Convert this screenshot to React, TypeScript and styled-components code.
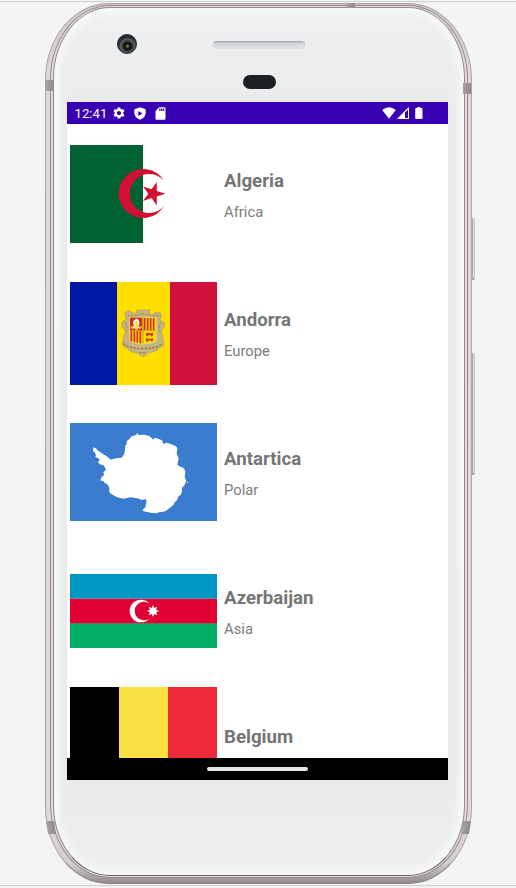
import React from "react";
import styled, { createGlobalStyle } from "styled-components";
import { MdSettings, MdSdCard } from "react-icons/md";

const GlobalStyle = createGlobalStyle`
  * { box-sizing: border-box; }
  body { margin: 0; background: #f4f4f4; font-family: Roboto, sans-serif; }
  svg { display: block; flex: none; }
`;

const Stage = styled.main`
  width: 516px;
  height: 888px;
  padding: 3px 0 0 45px;
  overflow: hidden;
  background:
    linear-gradient(#cdcdcd, #cdcdcd) 0 1px / 100% 1px no-repeat,
    linear-gradient(#cdcdcd, #cdcdcd) 0 885px / 100% 1px no-repeat,
    #f4f4f4;
`;

const Chassis = styled.div`
  position: relative;
  width: 427px;
  height: 881px;
  padding: 1px 3px 5px 4px;
  border: 1px solid #aaa4a6;
  border-bottom-color: #8a8285;
  border-radius: 64px / 77px;
  background: linear-gradient(#cfc8ca 0, #dfd8da 70px, #dfd9db 820px, #d2cccd 860px, #8f878a 880px);
`;

const Rim = styled.div`
  height: 100%;
  padding: 1px 2px;
  border: 1px solid #93888c;
  border-radius: 60px / 74px;
  background: #e2dcde;
`;

const Glass = styled.div`
  display: flex;
  flex-direction: column;
  height: 100%;
  border: 1px solid #958b8f;
  border-bottom-color: #65605f;
  border-radius: 57px / 71px;
  background: linear-gradient(#edeff0, #eaebed 12%, #e9eaec 88%, #eceef0);
  box-shadow: inset 0 0 7px 5px #f8f9fa;
`;

const AntennaBand = styled.i<{ $x: number; $y: number; $w: number; $h: number; $tilt?: number }>`
  position: absolute;
  left: ${(p) => p.$x}px;
  top: ${(p) => p.$y}px;
  width: ${(p) => p.$w}px;
  height: ${(p) => p.$h}px;
  background: linear-gradient(90deg, #a8a1a3, #918a8c);
  transform: skewX(${(p) => p.$tilt ?? 0}deg);
`;

const SideButton = styled.i<{ $y: number; $h: number }>`
  position: absolute;
  left: 426px;
  top: ${(p) => p.$y}px;
  width: 3px;
  height: ${(p) => p.$h}px;
  border: 1px solid #c5c6c4;
  border-left-color: #aaa6a7;
  border-bottom: 2px solid #8d8a88;
  border-radius: 0 2px 2px 0;
  background: #dfdfdd;
`;

const TopBezel = styled.div`
  display: grid;
  flex: none;
  height: 94px;
  padding-top: 26px;
  grid-template-columns: 63px 20px 76px 92px 1fr;
  grid-template-rows: 20px 14px;
  row-gap: 21px;
`;

const Camera = styled.div`
  grid-column: 2;
  width: 20px;
  height: 20px;
  border: 1px solid #24282b;
  border-radius: 50%;
  background: radial-gradient(circle at 53% 62%, #77713b 0 1px, #141716 2px 4px, #343a3d 5px, #5a6063 7px, #24282b 9px);
`;

const Speaker = styled.div`
  grid-column: 4;
  height: 8px;
  margin-top: 7px;
  border-radius: 4px 4px 2px 2px;
  border-top: 1px solid #a3a8b0;
  background: linear-gradient(#c3c7cd, #d8dbdf 40%, #dfe2e4);
`;

const Sensor = styled.div`
  grid-column: 1 / -1;
  justify-self: center;
  width: 33px;
  height: 14px;
  border-radius: 7px;
  background: #1b2023;
`;

const Screen = styled.section`
  display: flex;
  flex-direction: column;
  flex: none;
  width: 381px;
  height: 678px;
  margin-left: 13px;
  background: #fff;
`;

const StatusBar = styled.header`
  display: flex;
  justify-content: space-between;
  flex: none;
  height: 22px;
  padding: 0 25px 0 7.5px;
  background: #3700b3;
  color: #fff;
`;

const StatusGroup = styled.div`
  display: flex;
  align-items: center;
`;

const LeftStatus = styled(StatusGroup)`
  gap: 7.4px;
`;

const RightStatus = styled(StatusGroup)`
  gap: 1px;
`;

const Clock = styled.time`
  width: 30.5px;
  font-size: 13.2px;
  line-height: 22px;
  padding-top: 1px;
  white-space: nowrap;
`;

const BatterySlot = styled.span`
  margin-left: 5px;
`;

const CountryList = styled.ul`
  flex: 1;
  min-height: 0;
  margin: 0;
  padding: 0;
  overflow: hidden;
  list-style: none;
`;

const CountryRow = styled.li`
  display: grid;
  grid-template-columns: 147px 1fr;
  column-gap: 7px;
  align-items: center;
  height: 139px;
  padding: 1px 0 0 3px;
`;

const CountryText = styled.div`
  display: flex;
  flex-direction: column;
  gap: 8.5px;
  padding-top: 5px;
  color: #757575;
`;

const CountryName = styled.h2`
  margin: 0;
  font-size: 18.65px;
  font-weight: 700;
  line-height: 22px;
`;

const Continent = styled.p`
  min-height: 22px;
  margin: 0;
  color: #7c7c7c;
  font-size: 14.8px;
  line-height: 22px;
`;

const NavBar = styled.footer`
  display: flex;
  align-items: center;
  justify-content: center;
  flex: none;
  height: 22px;
  background: #000;
`;

const HomeHandle = styled.div`
  width: 101px;
  height: 4px;
  border-radius: 2px;
  background: #e6e6e6;
`;

function starPoints(cx: number, cy: number, outer: number, inner: number, tips: number) {
  return Array.from({ length: tips * 2 }, (_, i) => {
    const r = i % 2 ? inner : outer;
    const a = (Math.PI * i) / tips;
    return `${(cx + r * Math.cos(a)).toFixed(1)},${(cy + r * Math.sin(a)).toFixed(1)}`;
  }).join(" ");
}

const AlgeriaFlag = () => (
  <svg width="147" height="98" viewBox="30 30 441 294">
    <path fill="#fff" d="M30 30h441v294H30z" />
    <path fill="#006233" d="M30 30h219v294H30z" />
    <path fill="#d21034" d="M312 137A73.5 73.5 0 1 0 312 214A58.5 58.5 0 1 1 312 137z" />
    <polygon fill="#d21034" points={starPoints(279, 176, 37, 14, 5)} />
  </svg>
);

const AndorraFlag = () => (
  <svg width="147" height="103" viewBox="30 21 441 309">
    <path fill="#0018a8" d="M30 21h141v309H30z" />
    <path fill="#fedf00" d="M171 21h159v309H171z" />
    <path fill="#d0103a" d="M330 21h141v309H330z" />
    <path
      fill="#c7b37f"
      stroke="#b09a60"
      strokeWidth="2"
      d="M232 104q9 5 17 1q9 4 19-1l1 14q8 3 13-3q8-7 18-1q9 8 1 15q-2 5 2 9q12 3 11 13q-1 9-9 12q-3 7 1 15q6 9 3 17q4 7 2 14q-3 8-13 9q-7 11-20 13q-13 1-19 8l-9 6l-10-5q-8-8-20-8q-14-3-20-14q-12-2-13-11q-1-9 4-14q-2-9 3-16q4-8 0-15q-9-4-9-13q0-10 11-14q4-5 1-9q-7-7 1-15q9-7 18 1q6 5 13 2z"
    />
    <path fill="none" stroke="#8e7844" strokeWidth="4" strokeDasharray="7 4" d="M191 206q18 15 58 15q41 0 58-15" />
    <path fill="none" stroke="#947d45" strokeWidth="3" strokeDasharray="6 5" d="M203 123q22 1 46-7q24 8 46 7M195 143q9 10 3 29M303 143q-9 10-3 29M238 233h22" />
    <path fill="#ffdf00" stroke="#e8d8a4" strokeWidth="2" d="M209 127h80v64q0 12-15 13q-18 0-25 5q-8-5-25-5q-15-1-15-13z" />
    <path fill="#d52b1e" d="M210 128h37v38h-37z" />
    <path fill="#fff" d="M214 162l8-9q-7-14 4-20q6-4 10 2q5 12-1 19l9 8-9-2-6 3-6-3z" />
    <path fill="#ffdf00" d="M226 138h7v26h-7zM212 153h6v5h-6zM240 153h5v5h-5z" />
    <path stroke="#d52b1e" strokeWidth="5" d="M254 129v36M263 129v36M272 129v36M281 129v36M214 169v30M223 169v33M232 169v34M241 169v36" />
    <path fill="#d52b1e" d="M257 172l5 3h12l5-3-1 12h-5l-1-4h-7v4h-6zM257 188l5 3h12l5-3-1 11h-5l-1-3h-7v4h-6z" />
    <path stroke="#b97c25" strokeWidth="2" d="M210 167h78M249 128v78" />
  </svg>
);

const AntarcticaFlag = () => (
  <svg width="147" height="98" viewBox="30 24 441 294">
    <path fill="#3a7dce" d="M30 24h441v294H30z" />
    <polygon
      fill="#fff"
      points="100,97 108,100 112,106 124,113 130,118 140,124 152,134 168,130 185,128 192,118 195,105 196,92 200,86 200,79 208,72 215,64 228,60 232,54 236,60 252,59 268,63 274,68 280,74 284,68 296,72 306,76 310,87 320,83 334,88 348,94 352,100 350,115 356,130 352,150 362,155 372,160 376,170 374,185 379,198 375,206 372,214 366,217 366,228 362,240 355,244 352,254 344,262 340,270 330,278 322,285 312,290 300,291 288,295 272,293 262,291 250,289 248,284 256,277 258,266 260,258 256,252 246,255 232,250 212,247 190,251 170,246 155,238 148,232 148,218 142,208 134,204 130,198 122,197 123,188 132,180 130,172 138,164 134,156 130,150 118,148 114,140 120,134 112,128 106,126 108,120 104,112 99,108"
    />
    <path fill="#fff" d="M381 201h3v3h-3z" />
  </svg>
);

const AzerbaijanFlag = () => (
  <svg width="147" height="74" viewBox="30 27 441 222">
    <path fill="#0098c3" d="M30 27h441v74H30z" />
    <path fill="#e00034" d="M30 101h441v74H30z" />
    <path fill="#00ae65" d="M30 175h441v74H30z" />
    <path fill="#6b6f56" d="M30 174h441v3H30z" />
    <path fill="#fff" d="M268 115A34 34 0 1 0 268 161A28 28 0 1 1 268 115z" />
    <polygon fill="#fff" points={starPoints(279, 138, 18, 10, 8)} />
  </svg>
);

const BelgiumFlag = () => (
  <svg width="147" height="127" viewBox="0 0 147 127">
    <path d="M0 0h49v127H0z" />
    <path fill="#fae042" d="M49 0h49v127H49z" />
    <path fill="#ed2939" d="M98 0h49v127H98z" />
  </svg>
);

const ShieldIcon = () => (
  <svg width="12" height="13" viewBox="0 0 12 13">
    <path fill="#fff" fillRule="evenodd" d="M6 .2L11.7 2.2V6Q11.4 10.5 6 12.8Q.6 10.5.3 6V2.2zM4.3 3.9V8.9L8.5 6.4z" />
  </svg>
);

const WifiIcon = () => (
  <svg width="14" height="12" viewBox="0 0 14 12">
    <path fill="#fff" d="M7 11.8L.2 3.1Q7-2.5 13.8 3.1z" />
  </svg>
);

const SignalIcon = () => (
  <svg width="12" height="12" viewBox="0 0 12 12">
    <path fill="#fff" d="M0 12L8 3.8V12zM8 11h4v1H8zM11 .5h1V12h-1zM8 3.8L11.5.3V2L8 5.5z" />
  </svg>
);

const BatteryIcon = () => (
  <svg width="8" height="12" viewBox="0 0 8 12">
    <path fill="#fff" d="M2.3 0h3v1.1h1.3q.9 0 .9.9v9.1q0 .9-.9.9H1.1q-.9 0-.9-.9V2q0-.9.9-.9h1.2z" />
  </svg>
);

const countries = [
  { name: "Algeria", continent: "Africa", Flag: AlgeriaFlag },
  { name: "Andorra", continent: "Europe", Flag: AndorraFlag },
  { name: "Antartica", continent: "Polar", Flag: AntarcticaFlag },
  { name: "Azerbaijan", continent: "Asia", Flag: AzerbaijanFlag },
  { name: "Belgium", continent: "", Flag: BelgiumFlag },
];

export default function App() {
  return (
    <>
      <GlobalStyle />
      <Stage>
        <Chassis>
          <Rim>
            <Glass>
              <TopBezel>
                <Camera />
                <Speaker />
                <Sensor />
              </TopBezel>
              <Screen>
                <StatusBar>
                  <LeftStatus>
                    <Clock>12:41</Clock>
                    <MdSettings size={14} />
                    <ShieldIcon />
                    <MdSdCard size={15} />
                  </LeftStatus>
                  <RightStatus>
                    <WifiIcon />
                    <SignalIcon />
                    <BatterySlot>
                      <BatteryIcon />
                    </BatterySlot>
                  </RightStatus>
                </StatusBar>
                <CountryList>
                  {countries.map(({ name, continent, Flag }) => (
                    <CountryRow key={name}>
                      <Flag />
                      <CountryText>
                        <CountryName>{name}</CountryName>
                        <Continent>{continent}</Continent>
                      </CountryText>
                    </CountryRow>
                  ))}
                </CountryList>
                <NavBar>
                  <HomeHandle />
                </NavBar>
              </Screen>
            </Glass>
          </Rim>
          <AntennaBand $x={0} $y={76} $w={8} $h={11} />
          <AntennaBand $x={417} $y={79} $w={8} $h={11} />
          <AntennaBand $x={300} $y={-1} $w={9} $h={5} />
          <AntennaBand $x={1} $y={817} $w={8} $h={13} $tilt={9} />
          <AntennaBand $x={416} $y={817} $w={8} $h={13} $tilt={-9} />
          <SideButton $y={214} $h={62} />
          <SideButton $y={349} $h={122} />
        </Chassis>
      </Stage>
    </>
  );
}
